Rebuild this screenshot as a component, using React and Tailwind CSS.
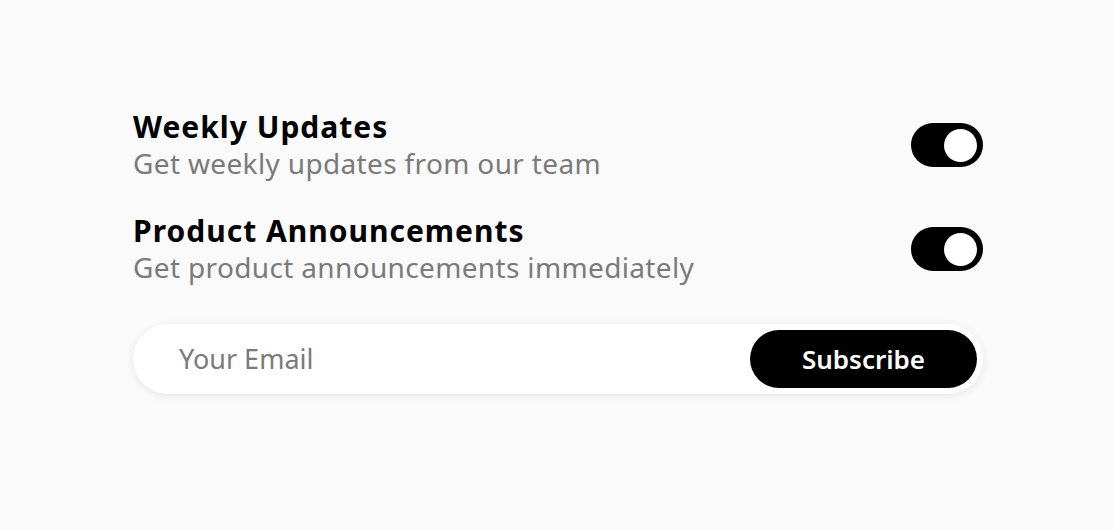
import { useState } from 'react';

const Toggle = ({ on, onClick }) => (
  <button
    type="button"
    onClick={onClick}
    className={`flex h-[44px] w-[72px] shrink-0 items-center rounded-full px-[6px] ${on ? 'justify-end bg-black' : 'justify-start bg-gray-300'}`}
  >
    <span className="block h-[33px] w-[33px] rounded-full bg-white" />
  </button>
);

const App = () => {
  const [weekly, setWeekly] = useState(true);
  const [product, setProduct] = useState(true);
  const [email, setEmail] = useState('');

  const rows = [
    { title: 'Weekly Updates', desc: 'Get weekly updates from our team', on: weekly, toggle: () => setWeekly(!weekly) },
    { title: 'Product Announcements', desc: 'Get product announcements immediately', on: product, toggle: () => setProduct(!product) },
  ];

  return (
    <div className="min-h-[530px] bg-[#fafafa] pt-[109px]" style={{ fontFamily: '"Noto Sans", "Open Sans", sans-serif' }}>
      <div className="ml-[133px] w-[850px]">
        <div className="flex flex-col gap-[32px]">
          {rows.map((r) => (
            <div key={r.title} className="flex items-center justify-between">
              <div>
                <div className="text-[30px] font-bold leading-[36px] tracking-[1px] text-black">{r.title}</div>
                <div className="text-[28px] leading-[36px] tracking-[0.35px] text-[#7a7a7a]">{r.desc}</div>
              </div>
              <Toggle on={r.on} onClick={r.toggle} />
            </div>
          ))}
        </div>
        <div className="mt-[39px] flex h-[70px] items-center rounded-full bg-white pl-[46px] pr-[6px] shadow-[0_2px_10px_rgba(0,0,0,0.08)]">
          <input
            type="email"
            value={email}
            onChange={(e) => setEmail(e.target.value)}
            placeholder="Your Email"
            className="min-w-0 flex-1 bg-transparent text-[27px] text-black outline-none placeholder:text-[#7a7a7a]"
          />
          <button type="button" className="h-[58px] w-[227px] rounded-full bg-black text-[26px] font-semibold text-white">
            Subscribe
          </button>
        </div>
      </div>
    </div>
  );
};

export default App;
